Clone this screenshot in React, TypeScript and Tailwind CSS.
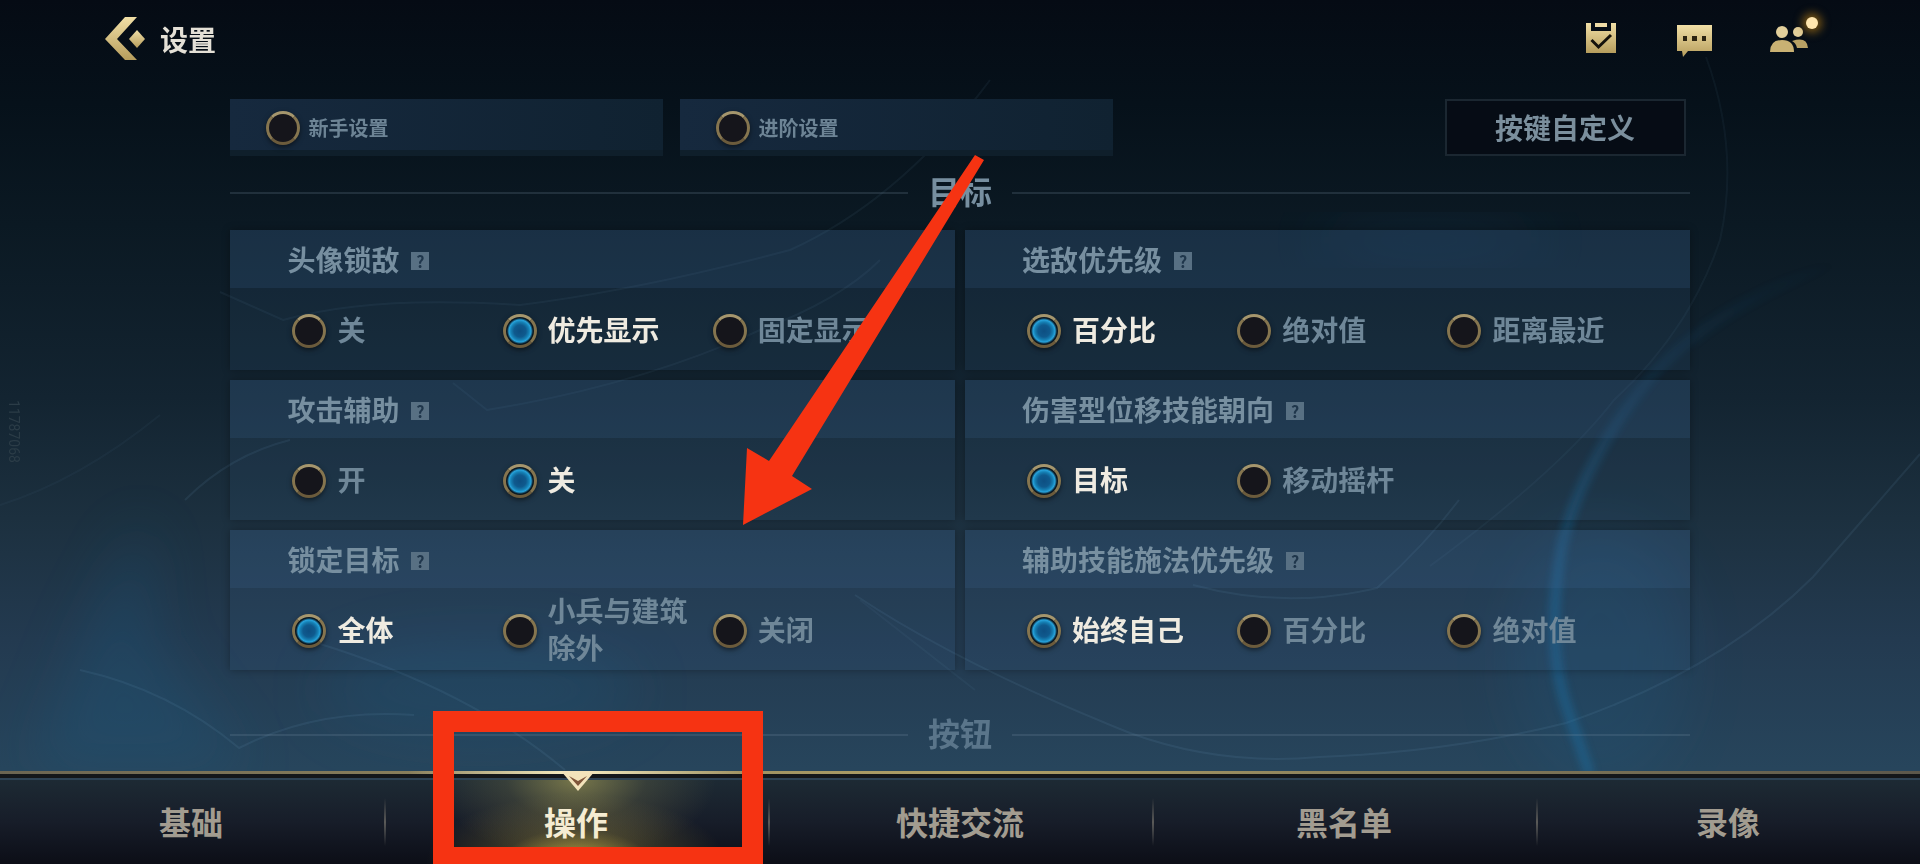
import { useState } from "react";

type Group = { title: string; options: string[]; initial: number };

const GROUPS: Group[] = [
  { title: "头像锁敌", options: ["关", "优先显示", "固定显示"], initial: 1 },
  { title: "选敌优先级", options: ["百分比", "绝对值", "距离最近"], initial: 0 },
  { title: "攻击辅助", options: ["开", "关"], initial: 1 },
  { title: "伤害型位移技能朝向", options: ["目标", "移动摇杆"], initial: 0 },
  { title: "锁定目标", options: ["全体", "小兵与建筑除外", "关闭"], initial: 0 },
  { title: "辅助技能施法优先级", options: ["始终自己", "百分比", "绝对值"], initial: 0 },
];

const TABS = ["基础", "操作", "快捷交流", "黑名单", "录像"];

const RADIO =
  "size-[34px] shrink-0 appearance-none rounded-full border-[3px] border-x-[#85754f] border-t-[#a5966d] border-b-[#6b5b3c] bg-[#15151b] shadow-[0_2px_5px_rgba(0,0,0,0.5)] checked:bg-[radial-gradient(circle,#0d4f82_0,#0f5a8e_6px,#1580b4_9px,#27a2db_11px,#0a1822_13px)]";

function Backdrop() {
  return (
    <svg
      className="pointer-events-none absolute inset-0 size-full"
      viewBox="0 0 1920 864"
      preserveAspectRatio="none"
      fill="none"
      aria-hidden="true"
    >
      <defs>
        <filter id="soft" x="-50%" y="-50%" width="200%" height="200%">
          <feGaussianBlur stdDeviation="28" />
        </filter>
        <filter id="glow" x="-20%" y="-20%" width="140%" height="140%">
          <feGaussianBlur stdDeviation="4" />
        </filter>
        <linearGradient id="streak" gradientUnits="userSpaceOnUse" x1="1840" y1="262" x2="1560" y2="600">
          <stop offset="0" stopColor="#1c74ab" stopOpacity="0" />
          <stop offset="0.5" stopColor="#1c74ab" stopOpacity="0.35" />
          <stop offset="1" stopColor="#1c74ab" />
        </linearGradient>
      </defs>
      <path d="M145 515 L155 640 L250 770 L30 770 L90 620Z" fill="#1f5a80" opacity="0.3" filter="url(#soft)" />
      <ellipse cx="480" cy="690" rx="160" ry="50" fill="#1f5a80" opacity="0.25" filter="url(#soft)" />
      <ellipse cx="1600" cy="660" rx="90" ry="130" fill="#1f5f88" opacity="0.2" filter="url(#soft)" />
      <ellipse cx="1430" cy="240" rx="120" ry="14" fill="#1f5a88" opacity="0.2" filter="url(#soft)" />
      <g stroke="#7fb0d0" strokeWidth="2" opacity="0.1">
        <path d="M855 595 Q960 665 1130 733 Q1220 766 1319 757 Q1450 752 1566 723 Q1720 670 1813 577 L1920 454" />
        <path d="M1193 585 Q1285 610 1377 588 Q1425 545 1459 500" />
        <path d="M1706 57 Q1740 150 1720 240 Q1690 330 1614 400 Q1560 470 1430 566" opacity="0.6" />
        <path d="M80 670 Q170 690 239 748 Q317 708 414 715" />
        <path d="M317 643 Q470 690 565 770" />
        <path d="M220 292 L283 320 Q370 295 520 305 Q640 290 790 250 Q900 200 990 80" opacity="0.7" />
        <path d="M453 383 L487 410 Q640 385 760 330 Q840 300 880 260" opacity="0.7" />
        <path d="M0 505 Q80 480 160 415" opacity="0.5" />
        <path d="M185 500 Q230 455 290 440" />
        <path d="M860 600 L975 690" opacity="0.6" />
      </g>
      <path
        d="M1840 262 Q1700 310 1638 393 Q1580 470 1562 545 Q1545 640 1566 705 L1590 775"
        stroke="url(#streak)"
        strokeWidth="10"
        opacity="0.45"
        filter="url(#glow)"
      />
    </svg>
  );
}

function TopBar() {
  return (
    <header className="flex h-[78px] items-center justify-between pr-[110px] pl-[105px]">
      <div className="flex items-center gap-[15px]">
        <button type="button" aria-label="返回">
          <svg width="40" height="44" viewBox="0 0 40 44" aria-hidden="true">
            <defs>
              <linearGradient id="gold" x1="0" y1="0" x2="0" y2="1">
                <stop offset="0" stopColor="#f1dfa6" />
                <stop offset="1" stopColor="#b69d5c" />
              </linearGradient>
            </defs>
            <path d="M20 0H32L12 22L32 43H20L0 22Z" fill="url(#gold)" />
            <path d="M32 13L40 22L32 31L24 22Z" fill="url(#gold)" />
          </svg>
        </button>
        <h1 className="text-[28px] leading-9 font-bold text-[#e4e0d6]">设置</h1>
      </div>
      <div className="flex items-center">
        <button type="button" aria-label="任务" className="mr-[61px]">
          <svg width="30" height="32" viewBox="0 0 30 32" aria-hidden="true">
            <path d="M0 0H5V8H25V0H30V30H0Z" fill="url(#gold)" />
            <path d="M9 0H21V4H9Z" fill="#efdca6" />
            <path d="M5.500 17L12.500 24L25 12" fill="none" stroke="#15120c" strokeWidth="3" />
          </svg>
        </button>
        <button type="button" aria-label="聊天" className="mr-[57px]">
          <svg width="36" height="32" viewBox="0 0 36 32" className="mt-1" aria-hidden="true">
            <path d="M0 0H35V26H11L6 32L5 26H0Z" fill="url(#gold)" />
            <path d="M6 11H10V16H6ZM15 11H20V16H15ZM25 11H29V16H25Z" fill="#2c2412" />
          </svg>
        </button>
        <button type="button" aria-label="好友" className="relative">
          <svg width="40" height="28" viewBox="0 0 40 28" aria-hidden="true">
            <circle cx="12" cy="7" r="6" fill="#e2cf9b" />
            <circle cx="28" cy="7" r="5" fill="#e2cf9b" />
            <path d="M0 27Q0 15 12 15Q24 15 24 27Z" fill="#c9b173" />
            <path d="M22 16Q37 11 38 23H27Q26 18 22 16Z" fill="#b9a164" />
          </svg>
          <span className="absolute -top-2 -right-2 size-3 rounded-full bg-[#ffe6ae] shadow-[0_0_8px_4px_rgba(190,130,20,0.6)]" />
        </button>
      </div>
    </header>
  );
}

function Preset({ label }: { label: string }) {
  return (
    <label className="flex h-[57px] max-w-[433px] flex-1 items-center gap-2 border-b-[6px] border-[#0f1f2b] bg-gradient-to-r from-[#16293e] to-[#102231] pt-[6px] pl-9 text-xl font-bold text-[#6d8495]">
      <input type="radio" name="preset" className={RADIO} />
      {label}
    </label>
  );
}

function Divider({ title, className }: { title: string; className: string }) {
  return (
    <div className={`flex items-center gap-5 ${className}`}>
      <span className="h-[2px] flex-1 bg-[#7f97a8]/20" />
      <h2 className="pb-1 text-[32px] leading-[33px] font-bold">{title}</h2>
      <span className="h-[2px] flex-1 bg-[#7f97a8]/20" />
    </div>
  );
}

function Panel({ group, id }: { group: Group; id: string }) {
  const [picked, setPicked] = useState(group.initial);
  return (
    <section role="radiogroup" aria-labelledby={`${id}-title`} className="min-w-0 shadow-[0_0_8px_rgba(0,0,0,0.3)]">
      <div className="flex h-[58px] items-center gap-3 bg-[#4272a6]/25 pl-[57px]">
        <h3 id={`${id}-title`} className="text-[28px] leading-9 font-bold text-[#778fa0]">
          {group.title}
        </h3>
        <button
          type="button"
          aria-label={`${group.title}说明`}
          className="mt-1 size-[18px] bg-[#587083] text-base leading-[18px] font-bold text-[#1f364b]"
        >
          ?
        </button>
      </div>
      <div className="grid h-[82px] grid-cols-3 items-center bg-[#4272a6]/12 pt-1 pr-8 pl-[62px]">
        {group.options.map((option, i) => (
          <label key={option} className="flex items-center gap-[11px]">
            <input
              type="radio"
              name={id}
              checked={picked === i}
              onChange={() => setPicked(i)}
              className={`peer ${RADIO}`}
            />
            <span className="pb-1 text-[28px] leading-[37px] font-bold text-[#6f8798] peer-checked:text-[#efebe1]">
              {option}
            </span>
          </label>
        ))}
      </div>
    </section>
  );
}

function TabBar() {
  return (
    <nav className="relative z-10 mt-auto bg-[#11141d]">
      <div className="h-[3px] bg-gradient-to-r from-[#6b6552] via-[#b0a066] to-[#5b574b]" />
      <div className="h-1 bg-[#14171a]" />
      <div className="grid grid-cols-5 border-t-2 border-[#2d4254] bg-gradient-to-b from-[#1d2a34] via-[#171d29] to-[#0c0e17]">
        {TABS.map((tab, i) => {
          const active = i === 1;
          return (
            <div key={tab} className="relative flex h-[84px] items-center">
              {active && (
                <>
                  <div className="absolute inset-0 bg-[radial-gradient(ellipse_140px_80px_at_50%_0,rgba(180,170,90,0.6),rgba(150,140,80,0.22)_50%,transparent),radial-gradient(ellipse_150px_70px_at_50%_100%,rgba(205,180,70,0.95),rgba(160,140,60,0.28)_50%,transparent)]" />
                  <div className="absolute inset-x-6 -top-[9px] h-[3px] bg-gradient-to-r from-transparent via-[#fbf0c4] to-transparent" />
                  <svg width="34" height="20" viewBox="0 0 34 20" className="absolute -top-[9px] left-1/2 -ml-[15px]" aria-hidden="true">
                    <path d="M0 0H34L17 20Z" fill="#f3e3bb" />
                    <path d="M8 5L17 10L26 5L17 15Z" fill="#80563a" />
                  </svg>
                </>
              )}
              {i > 0 && <span className="h-12 w-[2px] bg-gradient-to-b from-transparent via-[#5a5a58] to-transparent" />}
              <a
                href="#"
                aria-current={active ? "page" : undefined}
                className={`relative flex-1 pr-[2px] pb-[2px] text-center text-[32px] leading-10 font-bold ${active ? "text-[#f5ecd2]" : "text-[#a29c90]"}`}
              >
                {tab}
              </a>
              {active && <div className="absolute -top-[69px] bottom-0 left-[49px] w-[330px] border-x-[21px] border-t-[21px] border-b-[17px] border-[#f63312]" />}
            </div>
          );
        })}
      </div>
    </nav>
  );
}

export default function App() {
  return (
    <div className="relative flex min-h-screen flex-col overflow-hidden bg-[linear-gradient(#050b14_0%,#06111a_12%,#0b1923_26%,#132431_46%,#1c303f_60%,#233a50_74%,#27455c_89%)] font-['Noto_Sans_CJK_SC',sans-serif]">
      <Backdrop />
      <div className="relative flex flex-1 flex-col">
        <TopBar />
        <main className="px-[12%] pt-[21px]">
          <div className="flex items-center gap-[17px]">
            <Preset label="新手设置" />
            <Preset label="进阶设置" />
            <button
              type="button"
              className="mr-1 ml-auto h-[57px] w-[241px] border-2 border-[#1b2731] bg-[#060c15] pb-[2px] text-[28px] font-bold text-[#7b8f9d]"
            >
              按键自定义
            </button>
          </div>
          <Divider title="目标" className="pt-[18px] pb-[19px] text-[#778fa0]" />
          <div className="grid grid-cols-2 gap-[10px]">
            {GROUPS.map((group, i) => (
              <Panel key={group.title} group={group} id={`group-${i}`} />
            ))}
          </div>
          <Divider title="按钮" className="pt-[46px] text-[#5a758a]" />
        </main>
        <TabBar />
        <span className="absolute top-[400px] left-1 text-sm text-[#2b3c47] [writing-mode:vertical-rl] font-['Roboto',sans-serif]">
          11787068
        </span>
      </div>
      <svg
        className="pointer-events-none absolute inset-0 z-20 size-full"
        viewBox="0 0 1920 864"
        preserveAspectRatio="none"
        aria-hidden="true"
      >
        <path d="M743 525L747 448L769 461L975 155L984 160L792 476L812 489Z" fill="#f63312" />
      </svg>
    </div>
  );
}
